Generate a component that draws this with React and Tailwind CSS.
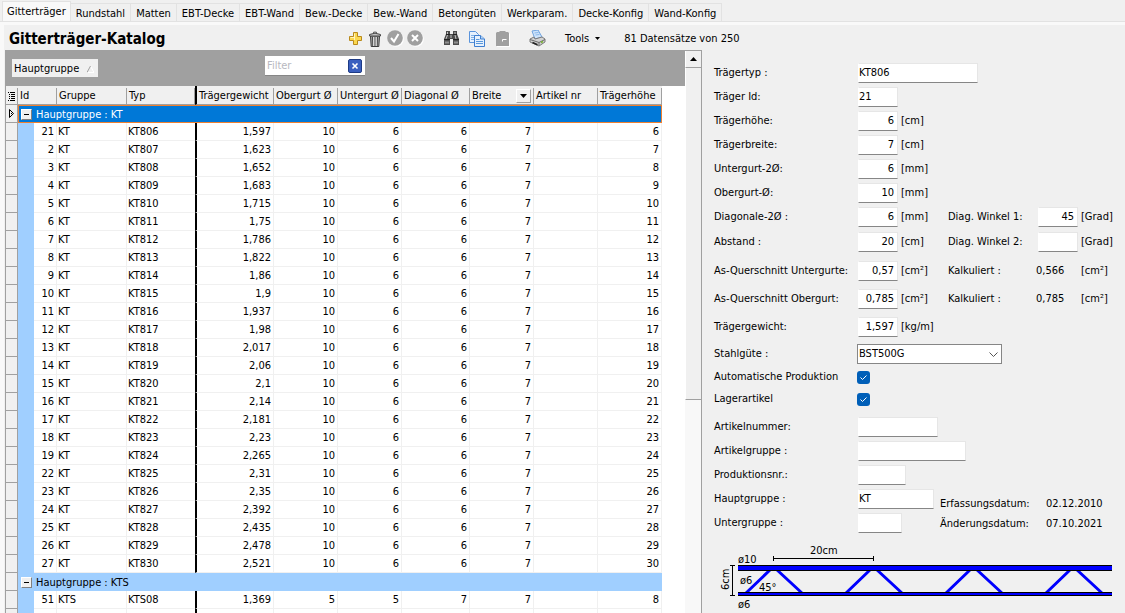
import { clsx } from "clsx";

const TABS = [
  "Gitterträger",
  "Rundstahl",
  "Matten",
  "EBT-Decke",
  "EBT-Wand",
  "Bew.-Decke",
  "Bew.-Wand",
  "Betongüten",
  "Werkparam.",
  "Decke-Konfig",
  "Wand-Konfig",
];

const KT_ROWS = [
  [21, "1,597"],
  [2, "1,623"],
  [3, "1,652"],
  [4, "1,683"],
  [5, "1,715"],
  [6, "1,75"],
  [7, "1,786"],
  [8, "1,822"],
  [9, "1,86"],
  [10, "1,9"],
  [11, "1,937"],
  [12, "1,98"],
  [13, "2,017"],
  [14, "2,06"],
  [15, "2,1"],
  [16, "2,14"],
  [17, "2,181"],
  [18, "2,23"],
  [19, "2,265"],
  [22, "2,31"],
  [23, "2,35"],
  [24, "2,392"],
  [25, "2,435"],
  [26, "2,478"],
  [27, "2,521"],
].map(([id, weight], i) => [id, "KT", `KT8${String(i + 6).padStart(2, "0")}`, weight, 10, 6, 6, 7, "", i + 6]);

const KTS_ROWS = [
  [51, "KTS", "KTS08", "1,369", 5, 5, 7, 7, "", 8],
  ["", "", "", "", "", "", "", "", "", ""],
];

function PlusIcon() {
  return (
    <svg className="size-4" viewBox="0 0 16 16">
      <path d="M6.500 1.500h4v4h4v4h-4v4h-4v-4h-4v-4h4z" fill="#fbd850" stroke="#b98a1c" />
      <path d="M7.500 9V2.500M3.500 6.500h4" fill="none" stroke="#fff4bd" />
    </svg>
  );
}

function TrashIcon() {
  return (
    <svg className="size-4" viewBox="0 0 16 16">
      <path d="M3.500 5h9l-.7 10.500h-7.600z" fill="#a8a8a8" stroke="#3c3c3c" />
      <path d="M5.500 6l.3 9M8 6v9M10.500 6l-.3 9" stroke="#4a4a4a" />
      <path d="M6.700 6v9M9.200 6v9" stroke="#e4e4e4" />
      <path d="M2.500 3.500q5.500-2.600 11 0v1.500h-11z" fill="#c2c2c2" stroke="#4a4a4a" />
      <path d="M6 1.500q2-1 4 0" fill="none" stroke="#555" />
    </svg>
  );
}

function RoundIcon({ path }) {
  return (
    <svg className="size-[17px]" viewBox="0 0 17 17">
      <circle cx="9" cy="9" r="7.800" fill="#fff" />
      <circle cx="8" cy="8" r="7.800" fill="#a0a0a0" />
      <path d={path} fill="none" stroke="#fff" strokeWidth="2" />
    </svg>
  );
}

function BinocularsIcon() {
  return (
    <svg className="size-[17px]" viewBox="0 0 17 17">
      <path d="M3 1h4v3h3V1h4v3l2 5v6h-6V9H7v6H1V9l2-5z" fill="#4c4c4c" />
      <path d="M4.500 2v3L3 9M12 2v3l1 4M8 5v3" fill="none" stroke="#c4c4c4" />
      <path d="M2 12.500h4M11 12.500h4" stroke="#8f8f8f" strokeWidth="2" />
      <path d="M1 9.500h6M10 9.500h6M3 4.500h4M10 4.500h4" stroke="#222" />
    </svg>
  );
}

function CopyIcon() {
  return (
    <svg className="size-4" viewBox="0 0 16 16">
      <path d="M.5.500h6l3 3v8h-9z" fill="#e6f1fd" stroke="#5a94dc" />
      <path d="M2 4.500h4M2 6.500h4M2 8.500h4" stroke="#7fb0e6" />
      <path d="M5.500 4.500h6l4 3.500v7.500h-10z" fill="#e6f1fd" stroke="#3f7fd0" />
      <path d="M11.500 4.500v3.500h4" fill="#b9d7f6" stroke="#3f7fd0" />
      <path d="M7 8.500h3.500M7 10.500h7M7 12.500h7" stroke="#5b98dc" />
    </svg>
  );
}

function PasteIcon() {
  return (
    <svg className="size-4" viewBox="0 0 16 16">
      <path d="M2 3l1-1h2l1-1h4l1 1h3l1 1v13H2z" fill="#fff" />
      <path d="M1 2l1-1h2l1-1h5l1 1h2l1 1v13H1z" fill="#a0a0a0" />
      <path d="M7.500 10.500v-2h4" fill="none" stroke="#fff" />
    </svg>
  );
}

function PrinterIcon() {
  return (
    <svg className="size-[17px]" viewBox="0 0 17 17">
      <path d="M3 1l6-1 4 7-7 2z" fill="#cfe4fb" stroke="#6fa3df" />
      <path d="M5.500 3l4-.5M6.500 5l4-.5" stroke="#8bb8ea" />
      <path d="M1 9l4-2 1 2 7-2 3 2v3l-6 4-9-4z" fill="#d2d2d2" stroke="#7a7a7a" />
      <path d="M1 9.500l9 3 6-3M10 12.500v3" fill="none" stroke="#6a6a6a" />
      <path d="M3.500 12.500l5 2.300" stroke="#222" strokeWidth="1.500" />
      <path d="M12 12.500l2-1" stroke="#78b52e" strokeWidth="1.500" />
    </svg>
  );
}

function ToolButton({ label, className, children }) {
  return (
    <button type="button" aria-label={label} className={clsx("flex size-5 items-center justify-center", className)}>
      {children}
    </button>
  );
}

function Toolbar() {
  return (
    <div className="flex h-[25px] shrink-0 items-center pl-1 pt-0.5">
      <h1 className="w-[336px] font-['DejaVu_Sans_Condensed','DejaVu_Sans',sans-serif] text-[15px] font-bold leading-5">
        Gitterträger-Katalog
      </h1>
      <ToolButton label="Neu"><PlusIcon /></ToolButton>
      <ToolButton label="Löschen"><TrashIcon /></ToolButton>
      <ToolButton label="Speichern"><RoundIcon path="M4 8l3 3.500 4.500-7.500" /></ToolButton>
      <ToolButton label="Abbrechen"><RoundIcon path="M5 5l6 6M11 5l-6 6" /></ToolButton>
      <ToolButton label="Suchen" className="ml-4"><BinocularsIcon /></ToolButton>
      <ToolButton label="Kopieren" className="ml-1.5"><CopyIcon /></ToolButton>
      <ToolButton label="Einfügen" className="ml-1.5"><PasteIcon /></ToolButton>
      <ToolButton label="Drucken" className="ml-3.5"><PrinterIcon /></ToolButton>
      <button type="button" className="ml-[18px] flex items-center gap-1.5">
        Tools
        <svg className="h-[3px] w-[5px]" viewBox="0 0 5 3"><path d="M0 0h5L2.500 3z" /></svg>
      </button>
      <span className="ml-6">81 Datensätze von 250</span>
    </div>
  );
}

function HeaderCell({ children, className, colSpan, bar }) {
  return (
    <th
      colSpan={colSpan}
      className={clsx(
        "h-[19px] overflow-hidden border-b border-[#a0a0a0] bg-[#f0f0f0] p-0 pt-0.5 text-left font-normal",
        bar && "border-l-2 border-l-black",
        className
      )}
    >
      <div className="flex h-4 items-center justify-between whitespace-nowrap border-r border-[#a0a0a0] pl-0.5">
        {children}
      </div>
    </th>
  );
}

function IndicatorCell({ current }) {
  return (
    <td className="h-[18px] border-b border-l border-r border-[#a0a0a0] bg-[#f0f0f0] p-0">
      {current && (
        <svg className="mx-auto block h-[9px] w-[5px]" viewBox="0 0 5 9">
          <path d="M.5.500L4.500 4.500 .5 8.500zM2 4.500h1" fill="none" stroke="#000" />
        </svg>
      )}
    </td>
  );
}

function GroupRow({ name, current }) {
  return (
    <tr>
      <IndicatorCell current={current} />
      <td
        colSpan={11}
        className={clsx(
          "h-[18px] border p-0",
          current ? "border-[#f08030] bg-[#0078d7] text-white" : "border-[#a0cfff] bg-[#a0cfff]"
        )}
      >
        <div className="flex h-4 items-center gap-1 pl-0.5">
          <button
            type="button"
            aria-label={`Gruppe ${name} einklappen`}
            className="flex size-[11px] items-center justify-center border border-white border-b-[#808080] border-r-[#808080] bg-[#f0f0f0]"
          >
            <span className="h-px w-[5px] bg-black" />
          </button>
          <span className="pt-0.5">Hauptgruppe : {name}</span>
        </div>
      </td>
    </tr>
  );
}

function DataRow({ row }) {
  return (
    <tr>
      <IndicatorCell />
      <td className="bg-[#a0cfff] p-0" />
      {row.map((value, i) => (
        <td
          key={i}
          className={clsx(
            "h-[18px] whitespace-nowrap border-b border-r border-[#f0f0f0] p-0 pt-px",
            i === 1 || i === 2 ? "pl-px text-left" : "pr-0.5 text-right",
            i === 2 && "border-r-0",
            i === 3 && "border-l-2 border-l-black"
          )}
        >
          {value}
        </td>
      ))}
    </tr>
  );
}

function Catalog() {
  return (
    <div className="min-h-0 flex-1 overflow-hidden bg-white">
      <table className="w-[657px] table-fixed border-separate border-spacing-0 leading-4">
        <colgroup>
          <col className="w-[13px]" />
          <col className="w-[16px]" />
          <col className="w-[23px]" />
          <col className="w-[70px]" />
          <col className="w-[68px]" />
          <col className="w-[79px]" />
          <col className="w-[64px]" />
          <col className="w-[64px]" />
          <col className="w-[68px]" />
          <col className="w-[64px]" />
          <col className="w-[64px]" />
          <col className="w-[64px]" />
        </colgroup>
        <thead>
          <tr>
            <HeaderCell className="border-l">
              <svg className="h-[9px] w-[7px]" viewBox="0 0 7 9">
                <path d="M0 .5h1M2 .5h5M1 2.500h1M3 2.500h4M1 4.500h1M3 4.500h4M1 6.500h1M3 6.500h4M0 8.500h1M2 8.500h5" stroke="#000" />
              </svg>
            </HeaderCell>
            <HeaderCell colSpan={2}>Id</HeaderCell>
            <HeaderCell>Gruppe</HeaderCell>
            <HeaderCell>Typ</HeaderCell>
            <HeaderCell bar>Trägergewicht</HeaderCell>
            <HeaderCell>Obergurt Ø</HeaderCell>
            <HeaderCell>Untergurt Ø</HeaderCell>
            <HeaderCell>Diagonal Ø</HeaderCell>
            <HeaderCell>
              Breite
              <button
                type="button"
                aria-label="Breite filtern"
                className="mr-0.5 flex h-3.5 w-[15px] items-center justify-center border border-white border-b-[#a0a0a0] border-r-[#a0a0a0]"
              >
                <svg className="h-1 w-[7px]" viewBox="0 0 7 4"><path d="M0 0h7L3.500 4z" /></svg>
              </button>
            </HeaderCell>
            <HeaderCell>Artikel nr</HeaderCell>
            <HeaderCell>Trägerhöhe</HeaderCell>
          </tr>
        </thead>
        <tbody>
          <GroupRow name="KT" current />
          {KT_ROWS.map((row) => <DataRow key={row[2]} row={row} />)}
          <GroupRow name="KTS" />
          {KTS_ROWS.map((row, i) => <DataRow key={i} row={row} />)}
        </tbody>
      </table>
    </div>
  );
}

function GroupBar() {
  return (
    <div className="flex h-9 shrink-0 items-center bg-[#a0a0a0] pl-[7px]">
      <button type="button" className="flex h-[18px] w-[86px] items-center gap-2 bg-[#f0f0f0] pl-0.5 pt-0.5">
        Hauptgruppe
        <svg className="size-[7px]" viewBox="0 0 7 7">
          <path d="M3.500 0L7 6.500H0" fill="none" stroke="#fff" />
          <path d="M3.500 0L0 6.500" stroke="#a0a0a0" />
        </svg>
      </button>
      <div className="mb-1 ml-[167px] flex h-5 w-[100px] items-center border-b border-[#868686] bg-white">
        <input
          aria-label="Filter"
          placeholder="Filter"
          className="w-full min-w-0 bg-transparent pl-0.5 outline-none placeholder:text-[#b8b8c0]"
        />
        <button
          type="button"
          aria-label="Filter löschen"
          className="mr-[3px] flex size-3.5 shrink-0 items-center justify-center rounded-[2px] border border-[#1d3a85] bg-[#3a5fbf]"
        >
          <svg className="size-2" viewBox="0 0 8 8"><path d="M1.500 1.500l5 5M6.500 1.500l-5 5" stroke="#fff" strokeWidth="1.600" /></svg>
        </button>
      </div>
    </div>
  );
}

function Scrollbar() {
  return (
    <div
      className="flex w-[17px] shrink-0 flex-col border-r border-t border-[#a0a0a0] bg-[#f8f8f8]"
      aria-hidden="true"
    >
      <div className="flex h-[17px] shrink-0 items-center justify-center border-b border-l border-b-[#a0a0a0] border-l-white bg-[#f0f0f0]">
        <svg className="h-1 w-[7px]" viewBox="0 0 7 4"><path d="M0 4h7L3.500 0z" /></svg>
      </div>
      <div className="h-[59%] border-b border-l border-b-[#a0a0a0] border-l-white bg-[#f0f0f0]" />
    </div>
  );
}

function Field({ id, label, value = "", unit, width = "w-10", align = "text-right", height = "h-6", children }) {
  return (
    <div className={clsx("flex items-center", height)}>
      <label htmlFor={id} className="w-36 shrink-0">{label}</label>
      <TextBox id={id} value={value} width={width} align={align} />
      {unit && <span className="ml-[3px] w-[47px]">{unit}</span>}
      {children}
    </div>
  );
}

function TextBox({ id, value, width, align }) {
  return (
    <input
      id={id}
      defaultValue={value}
      className={clsx(
        "h-5 border border-[#e6e6e6] border-b-[#868686] border-l-white bg-white pb-0.5 pr-[3px] outline-none",
        width,
        align
      )}
    />
  );
}

function Angle({ id, label, value }) {
  return (
    <>
      <label htmlFor={id} className="w-[90px]">{label}</label>
      <TextBox id={id} value={value} width="w-10" align="text-right" />
      <span className="ml-[3px]">[Grad]</span>
    </>
  );
}

function Calculated({ value }) {
  return (
    <>
      <span className="w-[88px]">Kalkuliert :</span>
      <span className="w-[45px]">{value}</span>
      <span>[cm²]</span>
    </>
  );
}

function CheckField({ id, label, height }) {
  return (
    <div className={clsx("flex items-center", height)}>
      <label htmlFor={id} className="w-[143px]">{label}</label>
      <span className="grid size-[13px] place-items-center">
        <input
          id={id}
          type="checkbox"
          defaultChecked
          className="col-start-1 row-start-1 size-[13px] appearance-none rounded-[3px] bg-[#005fb8]"
        />
        <svg className="pointer-events-none col-start-1 row-start-1 h-[5px] w-[7px]" viewBox="0 0 7 5">
          <path d="M.5 2.500l2 2 4-4" fill="none" stroke="#fff" />
        </svg>
      </span>
    </div>
  );
}

function GirderDrawing() {
  return (
    <svg className="h-[78px] w-[400px] text-[11px]" viewBox="0 0 400 78" role="img" aria-label="Gitterträger">
      <g stroke="#0000ff" strokeWidth="3">
        {[59, 159, 259, 359].map((x) => (
          <path key={x} d={`M${x - 2} 34L${x - 28} 59M${x + 3} 34L${x + 30} 59`} fill="none" />
        ))}
      </g>
      <path d="M24 30h374v6H24z" fill="#000" />
      <path d="M24 31h374v4H24z" fill="#0000ff" />
      <path d="M24 57h374v4H24z" fill="#000" />
      <path d="M24 58h374v2H24z" fill="#0000ff" />
      <path d="M59.500 21v5M59.500 23.500h100M159.500 21v5M16 30.500h5M18.500 30.500v30M16 60.500h5" stroke="#000" fill="none" />
      <text x="96" y="19">20cm</text>
      <text x="24" y="28">ø10</text>
      <text x="26" y="49">ø6</text>
      <text x="45" y="56">45°</text>
      <text x="24" y="73">ø6</text>
      <text transform="translate(15 55) rotate(-90)">6cm</text>
    </svg>
  );
}

function Details() {
  return (
    <form className="w-[423px] shrink-0 overflow-hidden pl-3 pt-[11px]">
      <Field id="typ" label="Trägertyp :" value="KT806" width="w-[120px]" align="text-left" />
      <Field id="tid" label="Träger Id:" value="21" align="text-left" />
      <Field id="hoehe" label="Trägerhöhe:" value="6" unit="[cm]" />
      <Field id="breite" label="Trägerbreite:" value="7" unit="[cm]" />
      <Field id="untergurt" label="Untergurt-2Ø:" value="6" unit="[mm]" />
      <Field id="obergurt" label="Obergurt-Ø:" value="10" unit="[mm]" />
      <Field id="diagonale" label="Diagonale-2Ø :" value="6" unit="[mm]">
        <Angle id="winkel1" label="Diag. Winkel 1:" value="45" />
      </Field>
      <Field id="abstand" label="Abstand :" value="20" unit="[cm]" height="h-[26px]">
        <Angle id="winkel2" label="Diag. Winkel 2:" value="" />
      </Field>
      <div className="pt-0.5">
        <Field id="as-unter" label="As-Querschnitt Untergurte:" value="0,57" unit="[cm²]" height="h-7">
          <Calculated value="0,566" />
        </Field>
        <Field id="as-ober" label="As-Querschnitt Obergurt:" value="0,785" unit="[cm²]" height="h-7">
          <Calculated value="0,785" />
        </Field>
        <Field id="gewicht" label="Trägergewicht:" value="1,597" unit="[kg/m]" height="h-7" />
      </div>
      <div className="flex h-[26px] items-center">
        <label htmlFor="stahl" className="w-[143px]">Stahlgüte :</label>
        <div className="grid w-[145px] items-center">
          <select
            id="stahl"
            className="col-start-1 row-start-1 h-5 appearance-none border border-[#868686] bg-white pl-px leading-4 outline-none"
          >
            <option>BST500G</option>
          </select>
          <svg className="pointer-events-none col-start-1 row-start-1 mr-1 h-[5px] w-[9px] justify-self-end" viewBox="0 0 9 5">
            <path d="M.5.500l4 4 4-4" fill="none" stroke="#555" />
          </svg>
        </div>
      </div>
      <CheckField id="auto" label="Automatische Produktion" height="h-5" />
      <CheckField id="lager" label="Lagerartikel" height="h-6" />
      <div className="pt-1">
        <Field id="artnr" label="Artikelnummer:" width="w-20" />
        <Field id="artgr" label="Artikelgruppe :" width="w-[108px]" />
        <Field id="prodnr" label="Produktionsnr.:" width="w-12" />
      </div>
      <div className="flex">
        <div className="w-[226px]">
          <Field id="haupt" label="Hauptgruppe :" value="KT" width="w-[76px]" align="text-left" />
          <Field id="unter" label="Untergruppe :" width="w-11" />
        </div>
        <dl className="grid grid-cols-[106px_auto] content-end pb-px leading-5">
          <dt>Erfassungsdatum:</dt>
          <dd>02.12.2010</dd>
          <dt>Änderungsdatum:</dt>
          <dd>07.10.2021</dd>
        </dl>
      </div>
      <GirderDrawing />
    </form>
  );
}

export default function App() {
  return (
    <div className="flex h-screen flex-col overflow-hidden bg-[#f0f0f0] font-['DejaVu_Sans_Condensed','DejaVu_Sans',sans-serif] text-[11px] leading-4 text-black">
      <nav role="tablist" className="flex h-[22px] shrink-0 items-end border-b border-[#e2e2e2] pl-0.5">
        {TABS.map((tab, i) => (
          <button
            key={tab}
            type="button"
            role="tab"
            aria-selected={i === 0}
            className={clsx(
              "whitespace-nowrap border-r border-t border-[#e2e2e2]",
              i === 0 ? "h-5 border-l bg-[#f9f9f9] px-1" : "h-[18px] px-[5px] pt-0.5"
            )}
          >
            {tab}
          </button>
        ))}
      </nav>
      <main className="flex min-h-0 flex-1 flex-col border-l-4 border-t-[3px] border-[#f9f9f9] pl-px">
        <Toolbar />
        <div className="flex min-h-0 flex-1">
          <section className="flex min-w-0 flex-1">
            <div className="flex min-w-0 flex-1 flex-col">
              <GroupBar />
              <Catalog />
            </div>
            <Scrollbar />
          </section>
          <Details />
        </div>
      </main>
    </div>
  );
}
